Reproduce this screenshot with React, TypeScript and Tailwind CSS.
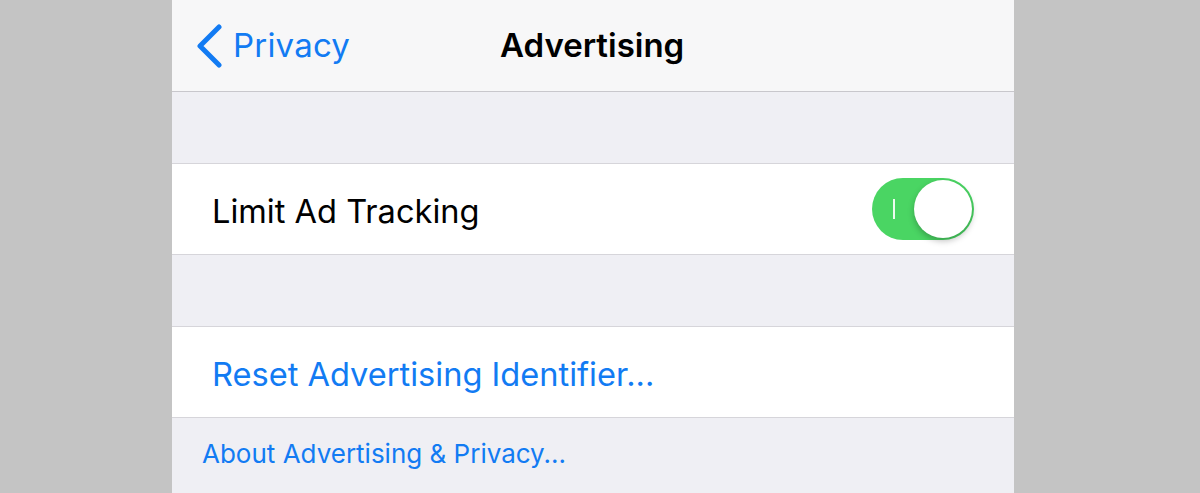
export default function App() {
  return (
    <div className="flex h-[493px] w-full justify-center overflow-hidden bg-[#c4c4c4] font-['Inter',sans-serif]">
      <div className="ml-[-14px] flex w-[842px] flex-col bg-[#efeff4]">
        <div className="relative flex h-[92px] shrink-0 items-center border-b border-[#c8c7cc] bg-[#f7f7f8]">
          <div className="flex items-center pl-[24px] text-[#127bf3]">
            <svg width="28" height="44" viewBox="0 0 28 44" fill="none">
              <path d="M23 3 L4 22 L23 41" stroke="currentColor" strokeWidth="5" strokeLinecap="round" strokeLinejoin="round" />
            </svg>
            <span className="ml-[9px] text-[33px] leading-none tracking-[0.2px]">Privacy</span>
          </div>
          <span className="absolute left-[328px] text-[33px] font-semibold leading-none text-black">Advertising</span>
        </div>
        <div className="h-[72px] shrink-0 border-b border-[#d6d5da]" />
        <div className="flex h-[91px] shrink-0 items-center justify-between border-b border-[#d6d5da] bg-white pl-[40px] pr-[40px]">
          <span className="pt-[5px] text-[32.6px] leading-none text-black">Limit Ad Tracking</span>
          <div className="flex h-[62px] w-[102px] items-center justify-between rounded-full bg-[#4ad563] pl-[21px] pr-[2px]">
            <span className="h-[20px] w-[2px] bg-white/90" />
            <span className="h-[58px] w-[58px] rounded-full bg-white shadow-[0_3px_6px_rgba(0,0,0,0.25)]" />
          </div>
        </div>
        <div className="h-[72px] shrink-0 border-b border-[#d6d5da]" />
        <div className="flex h-[91px] shrink-0 items-center border-b border-[#d6d5da] bg-white pl-[40px]">
          <span className="pt-[5px] text-[32.6px] leading-none text-[#127bf3]">Reset Advertising Identifier...</span>
        </div>
        <div className="pl-[30px] pt-[23px]">
          <span className="text-[26px] leading-none text-[#127bf3]">About Advertising &amp; Privacy...</span>
        </div>
      </div>
    </div>
  );
}
